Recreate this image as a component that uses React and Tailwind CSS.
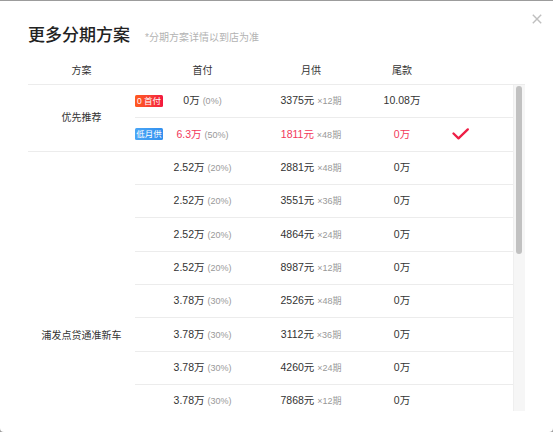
import React from 'react';

const cols = ['w-[107px]', 'w-[135px]', 'w-[82px]', 'w-[100px]'];

const featured = [
  { badge: '0 首付', tone: 'red', down: '0万', pct: '(0%)', monthly: '3375元', term: '×12期', tail: '10.08万', hot: false },
  { badge: '低月供', tone: 'blue', down: '6.3万', pct: '(50%)', monthly: '1811元', term: '×48期', tail: '0万', hot: true },
];

const spdb = [
  ['2.52万', '(20%)', '2881元', '×48期'],
  ['2.52万', '(20%)', '3551元', '×36期'],
  ['2.52万', '(20%)', '4864元', '×24期'],
  ['2.52万', '(20%)', '8987元', '×12期'],
  ['3.78万', '(30%)', '2526元', '×48期'],
  ['3.78万', '(30%)', '3112元', '×36期'],
  ['3.78万', '(30%)', '4260元', '×24期'],
  ['3.78万', '(30%)', '7868元', '×12期'],
];

const Check = () => (
  <svg width="17" height="12" viewBox="0 0 17 12" fill="none">
    <path d="M1.5 5.5 L6.5 10.3 L15.8 1.4" stroke="#ee1e45" strokeWidth="2.3" strokeLinecap="round" strokeLinejoin="round" />
  </svg>
);

const Amount = ({ main, sub, red }) => (
  <span className={red ? 'text-[#f2385a]' : 'text-[#333]'}>
    {main} <span className="text-[9px] text-[#999]">{sub}</span>
  </span>
);

const App = () => (
  <div className="w-[553px] h-[432px] bg-[#9c9c9c] pt-[1px] overflow-hidden font-['Liberation_Sans','Noto_Sans_CJK_SC',sans-serif]">
    <div className="relative h-[431px] bg-white rounded-b-[4px]">
      <button className="absolute right-[11px] top-[13px] w-[10px] h-[10px]">
        <svg width="10" height="10" viewBox="0 0 10 10">
          <path d="M0.8 0.8 L9.2 9.2 M9.2 0.8 L0.8 9.2" stroke="#bfbfbf" strokeWidth="1.4" />
        </svg>
      </button>

      <div className="flex items-baseline pl-[28px] pt-[26px]">
        <h2 className="text-[17px] leading-[17px] text-[#222] font-medium">更多分期方案</h2>
        <span className="ml-[15px] text-[10px] text-[#b3b3b3]">*分期方案详情以到店为准</span>
      </div>

      <div className="mx-[28px] mt-[12px] h-[28px] flex items-center border-b border-[#ececec] text-[10px] text-[#333]">
        <div className={`${cols[0]} text-center`}>方案</div>
        <div className={`${cols[1]} text-center`}>首付</div>
        <div className={`${cols[2]} text-center`}>月供</div>
        <div className={`${cols[3]} text-center`}>尾款</div>
      </div>

      <div className="mx-[28px] h-[326px] flex">
        <div className="flex-1 h-full overflow-hidden text-[10.5px]">
          <div className="flex">
            <div className={`${cols[0]} shrink-0 flex items-center justify-center border-b border-[#ececec] text-[10px] text-[#333]`}>优先推荐</div>
            <div className="flex-1">
              {featured.map((r) => (
                <div key={r.badge} className="h-[33.33px] flex items-center border-b border-[#ececec]">
                  <div className={`${cols[1]} flex items-center`}>
                    <span
                      className={`w-[28px] h-[12px] rounded-[1.5px] flex items-center justify-center text-[8.5px] leading-none text-white ${
                        r.tone === 'red' ? 'bg-gradient-to-r from-[#ff5a1e] to-[#f3163e]' : 'bg-gradient-to-r from-[#4aa6f6] to-[#3290ef]'
                      }`}
                    >
                      {r.badge}
                    </span>
                    <span className="w-[79px] text-center">
                      <Amount main={r.down} sub={r.pct} red={r.hot} />
                    </span>
                  </div>
                  <div className={`${cols[2]} text-center`}>
                    <Amount main={r.monthly} sub={r.term} red={r.hot} />
                  </div>
                  <div className={`${cols[3]} text-center ${r.hot ? 'text-[#f2385a]' : 'text-[#333]'}`}>{r.tail}</div>
                  {r.hot ? <Check /> : null}
                </div>
              ))}
            </div>
          </div>

          <div className="flex">
            <div className={`${cols[0]} shrink-0 flex items-center justify-center pt-[102px] text-[10px] text-[#333]`}>浦发点贷通准新车</div>
            <div className="flex-1">
              {spdb.map((r, i) => (
                <div key={i} className="h-[33.33px] flex items-center border-b border-[#ececec]">
                  <div className={`${cols[1]} text-center`}>
                    <Amount main={r[0]} sub={r[1]} />
                  </div>
                  <div className={`${cols[2]} text-center`}>
                    <Amount main={r[2]} sub={r[3]} />
                  </div>
                  <div className={`${cols[3]} text-center text-[#333]`}>0万</div>
                </div>
              ))}
            </div>
          </div>
        </div>

        <div className="w-[12px] h-full bg-[#f6f6f6] border-l border-[#efefef] pt-[1px] pl-[2px] pr-[3px]">
          <div className="h-[168px] rounded-full bg-[#c1c1c1]" />
        </div>
      </div>
    </div>
  </div>
);

export default App;
